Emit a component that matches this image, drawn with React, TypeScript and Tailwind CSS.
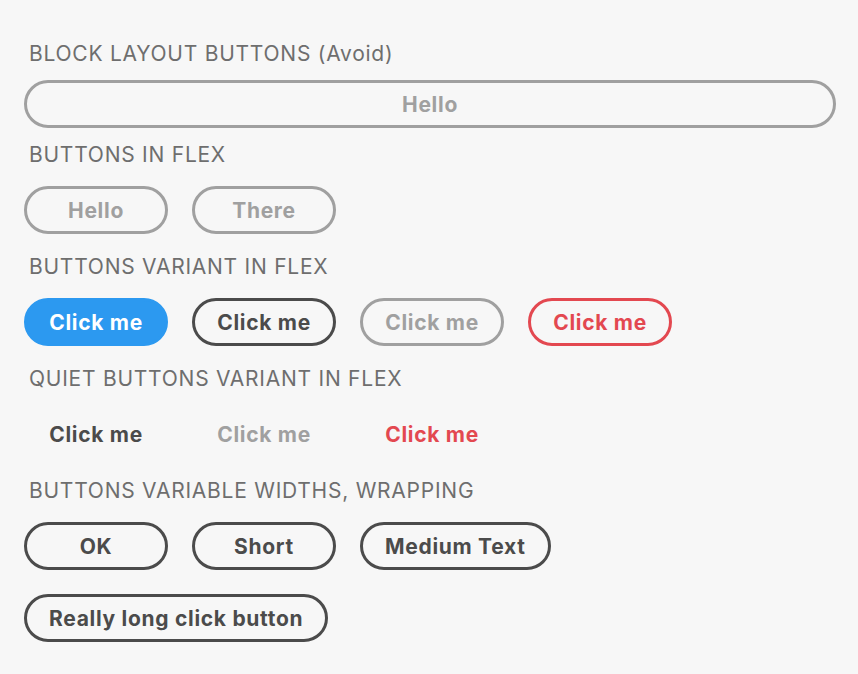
import React from "react";

const font = { fontFamily: "Inter, 'Noto Sans', sans-serif" };

function Label({ children, className = "" }: { children: React.ReactNode; className?: string }) {
  return (
    <div className={`pl-[5px] text-[21px] leading-[24px] tracking-[0.75px] font-normal text-[#6e6e6e] ${className}`}>{children}</div>
  );
}

const base =
  "h-[48px] min-w-[144px] px-[22px] pt-[2px] rounded-full text-[21px] leading-[24px] tracking-[0.7px] font-bold flex items-center justify-center whitespace-nowrap";

function Btn({ variant, children, className = "" }: { variant: string; children: React.ReactNode; className?: string }) {
  let v = "";
  if (variant === "cta") v = "bg-[#2c99f0] text-white border-[3px] border-[#2c99f0]";
  else if (variant === "dark") v = "border-[3px] border-[#4b4b4b] text-[#4b4b4b]";
  else if (variant === "gray") v = "border-[3px] border-[#a0a0a0] text-[#a0a0a0]";
  else if (variant === "red") v = "border-[3px] border-[#e34850] text-[#e34850]";
  else if (variant === "qdark") v = "border-[3px] border-transparent text-[#4b4b4b]";
  else if (variant === "qgray") v = "border-[3px] border-transparent text-[#a0a0a0]";
  else if (variant === "qred") v = "border-[3px] border-transparent text-[#e34850]";
  return <button className={`${base} ${v} ${className}`}>{children}</button>;
}

export default function App() {
  return (
    <div className="min-h-[674px] w-[858px] bg-[#f7f7f7] pl-6 pr-[22px] pt-[42px]" style={font}>
      <Label>BLOCK LAYOUT BUTTONS (Avoid)</Label>
      <Btn variant="gray" className="mt-[14px] w-full">Hello</Btn>

      <Label className="mt-[15px]">BUTTONS IN FLEX</Label>
      <div className="mt-[19px] flex gap-6">
        <Btn variant="gray">Hello</Btn>
        <Btn variant="gray">There</Btn>
      </div>

      <Label className="mt-[21px]">BUTTONS VARIANT IN FLEX</Label>
      <div className="mt-[19px] flex gap-6">
        <Btn variant="cta">Click me</Btn>
        <Btn variant="dark">Click me</Btn>
        <Btn variant="gray">Click me</Btn>
        <Btn variant="red">Click me</Btn>
      </div>

      <Label className="mt-[21px]">QUIET BUTTONS VARIANT IN FLEX</Label>
      <div className="mt-[19px] flex gap-6">
        <Btn variant="qdark">Click me</Btn>
        <Btn variant="qgray">Click me</Btn>
        <Btn variant="qred">Click me</Btn>
      </div>

      <Label className="mt-[21px]">BUTTONS VARIABLE WIDTHS, WRAPPING</Label>
      <div className="mt-[19px] flex flex-wrap gap-6 w-[560px]">
        <Btn variant="dark">OK</Btn>
        <Btn variant="dark">Short</Btn>
        <Btn variant="dark">Medium Text</Btn>
        <Btn variant="dark">Really long click button</Btn>
      </div>
    </div>
  );
}
